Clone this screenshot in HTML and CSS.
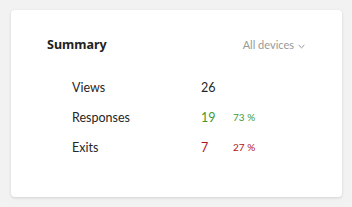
FILE: index.html
```html
<!DOCTYPE html>
<html>
<head>
<meta charset="utf-8">
<link rel="stylesheet" href="styles.css">
</head>
<body>
<div class="card">
  <div class="header">
    <div class="title">Summary</div>
    <div class="filter">All devices <svg class="chev" width="7" height="5" viewBox="0 0 7 5"><path d="M0.6 1 L3.5 3.8 L6.4 1" fill="none" stroke="#8f8f8f" stroke-width="1"/></svg></div>
  </div>
  <div class="stats">
    <div class="label">Views</div><div class="num">26</div><div class="pct"></div>
    <div class="label">Responses</div><div class="num green">19</div><div class="pct green">73 %</div>
    <div class="label">Exits</div><div class="num red">7</div><div class="pct red">27 %</div>
  </div>
</div>
</body>
</html>
```
FILE: styles.css
```css
html, body { margin: 0; padding: 0; }
body {
  background: #f2f2f2;
  width: 352px;
  height: 207px;
  padding: 10px 10px 10px 11px;
  box-sizing: border-box;
  font-family: "Lato", "Noto Sans", sans-serif;
  color: #262626;
}
.card {
  width: 331px;
  height: 187px;
  background: #fff;
  border-radius: 4px;
  box-shadow: 0 1px 3px rgba(0,0,0,0.14);
  box-sizing: border-box;
  padding: 24px 37px 0 36px;
}
.header {
  display: flex;
  justify-content: space-between;
  align-items: center;
  height: 20px;
}
.title {
  font-family: "Noto Sans", sans-serif;
  font-weight: 700;
  font-size: 12.5px;
  color: #222;
}
.filter {
  font-size: 11px;
  color: #999;
  display: flex;
  align-items: center;
  gap: 4px;
}
.chev { margin-top: 5px; }
.stats {
  margin-top: 18px;
  margin-left: 25px;
  display: grid;
  grid-template-columns: 129px 32px auto;
  grid-auto-rows: 30px;
  align-items: center;
  font-size: 12.5px;
}
.pct { font-size: 10px; }
.green { color: #3f9a33; }
.red { color: #b1121c; }
```
